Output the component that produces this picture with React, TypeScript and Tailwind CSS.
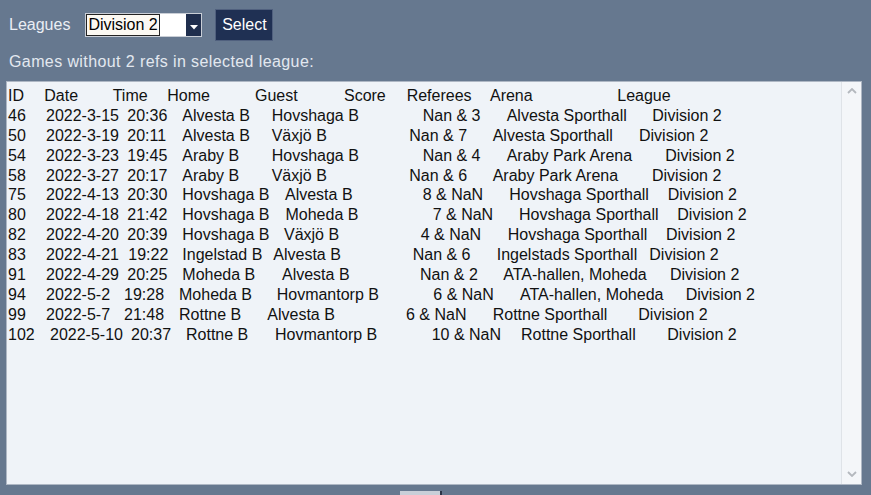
import React from "react";

type Seg = [string, number];

const rows: Seg[][] = [
  [["ID", 8], ["Date", 44.3], ["Time", 112.7], ["Home", 167.3], ["Guest", 255], ["Score", 344], ["Referees", 406.7], ["Arena", 490], ["League", 617.3]],
  [["46", 8], ["2022-3-15", 46], ["20:36", 127.3], ["Alvesta B", 182.3], ["Hovshaga B", 271.7], ["Nan & 3", 422.7], ["Alvesta Sporthall", 506.7], ["Division 2", 652.3]],
  [["50", 8], ["2022-3-19", 46], ["20:11", 127.3], ["Alvesta B", 182.3], ["Växjö B", 271.7], ["Nan & 7", 409.3], ["Alvesta Sporthall", 492.7], ["Division 2", 639]],
  [["54", 8], ["2022-3-23", 46], ["19:45", 127.3], ["Araby B", 182.3], ["Hovshaga B", 271.7], ["Nan & 4", 422.7], ["Araby Park Arena", 506.7], ["Division 2", 665.3]],
  [["58", 8], ["2022-3-27", 46], ["20:17", 127.3], ["Araby B", 182.3], ["Växjö B", 271.7], ["Nan & 6", 409.3], ["Araby Park Arena", 492.7], ["Division 2", 652]],
  [["75", 8], ["2022-4-13", 46], ["20:30", 127.3], ["Hovshaga B", 182.3], ["Alvesta B", 285], ["8 & NaN", 422.7], ["Hovshaga Sporthall", 509.3], ["Division 2", 667.7]],
  [["80", 8], ["2022-4-18", 46], ["21:42", 127.3], ["Hovshaga B", 182.3], ["Moheda B", 285.5], ["7 & NaN", 432.7], ["Hovshaga Sporthall", 519], ["Division 2", 677.3]],
  [["82", 8], ["2022-4-20", 46], ["20:39", 127.3], ["Hovshaga B", 182.3], ["Växjö B", 284], ["4 & NaN", 420.7], ["Hovshaga Sporthall", 507.7], ["Division 2", 666]],
  [["83", 8], ["2022-4-21", 46], ["19:22", 128.3], ["Ingelstad B", 182.3], ["Alvesta B", 273.3], ["Nan & 6", 412.7], ["Ingelstads Sporthall", 496.7], ["Division 2", 649.3]],
  [["91", 8], ["2022-4-29", 46], ["20:25", 127.3], ["Moheda B", 182.3], ["Alvesta B", 282], ["Nan & 2", 420], ["ATA-hallen, Moheda", 503.3], ["Division 2", 670]],
  [["94", 8], ["2022-5-2", 46], ["19:28", 124], ["Moheda B", 179], ["Hovmantorp B", 276.7], ["6 & NaN", 433.3], ["ATA-hallen, Moheda", 520], ["Division 2", 685.7]],
  [["99", 8], ["2022-5-7", 46], ["21:48", 124], ["Rottne B", 179], ["Alvesta B", 267.3], ["6 & NaN", 406], ["Rottne Sporthall", 492.7], ["Division 2", 638.3]],
  [["102", 8], ["2022-5-10", 50], ["20:37", 131], ["Rottne B", 186], ["Hovmantorp B", 275], ["10 & NaN", 431.7], ["Rottne Sporthall", 521], ["Division 2", 667.3]],
];

function Row({ segs }: { segs: Seg[] }) {
  return (
    <div className="flex h-[19.9px] items-center whitespace-nowrap">
      {segs.map(([t, x], i) => {
        const next = segs[i + 1];
        const style: React.CSSProperties = next ? { width: next[1] - x } : {};
        if (i === 0) style.marginLeft = x - 8;
        return (
          <span key={i} className="shrink-0" style={style}>
            {t}
          </span>
        );
      })}
    </div>
  );
}

export default function App() {
  return (
    <div
      className="w-[871px] h-[495px] overflow-hidden bg-[#66788f] pt-[9px]"
      style={{ fontFamily: '"Liberation Sans", Arial, sans-serif' }}
    >
      <div className="flex h-[32px] items-center pl-[9px]">
        <span className="text-[16px] text-[#eaeef4]">Leagues</span>
        <div className="ml-[15px] flex h-[24px] w-[117px] items-center border border-[#c9ced6] bg-white">
          <div className="flex h-full flex-1 items-center bg-[#fbf8f2]">
            <span className="flex h-[22px] items-center border border-[#222] pl-[1px] pr-[1px] text-[16px] leading-none text-black">
              Division 2
            </span>
            <div className="h-full flex-1 bg-white" />
          </div>
          <div className="flex h-[22px] w-[15px] items-end justify-center bg-[#1f2e4d] pb-[6px]">
            <svg width="8" height="5" viewBox="0 0 8 5">
              <path d="M0 0 H8 L4 4.5 Z" fill="#ffffff" />
            </svg>
          </div>
        </div>
        <button className="ml-[13px] flex h-[32px] w-[58px] items-center justify-center border border-[#50607e] bg-[#1f3053] text-[16px] text-white">
          Select
        </button>
      </div>
      <div className="mt-[11px] h-[20px] pl-[9px] text-[16px] leading-[20px] tracking-[0.4px] text-[#e3e8ef]">
        Games without 2 refs in selected league:
      </div>
      <div className="ml-[6px] mt-[9px] flex h-[404px] w-[856px] border border-[#aeb7c4] bg-[#eff3f8]">
        <div className="flex-1 pl-[1px] pt-[4px] text-[16px] text-[#111111]">
          {rows.map((r, i) => (
            <Row key={i} segs={r} />
          ))}
        </div>
        <div className="flex w-[20px] flex-col items-center justify-between border-l border-[#dfe3e8] bg-[#f4f6f9] pb-[7px] pt-[6px]">
          <svg width="10" height="6" viewBox="0 0 10 6">
            <path d="M1 5 L5 1 L9 5" stroke="#b4b8be" strokeWidth="1.8" fill="none" />
          </svg>
          <svg width="10" height="6" viewBox="0 0 10 6">
            <path d="M1 1 L5 5 L9 1" stroke="#b4b8be" strokeWidth="1.8" fill="none" />
          </svg>
        </div>
      </div>
      <div className="mt-[6px] flex pl-[400px]">
        <div className="h-[10px] w-[42px] border-r-2 border-[#2a3447] bg-[#c9cfd8]" />
      </div>
    </div>
  );
}
